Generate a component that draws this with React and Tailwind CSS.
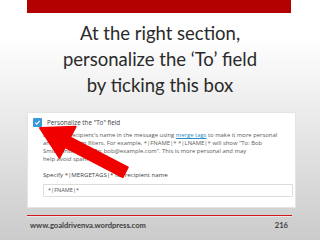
export default function App() {
  return (
    <div className="relative w-[320px] h-[240px] overflow-hidden bg-linear-to-b from-white from-[15%] to-[#cbcbcb]">
      <div className="ml-[27px] w-[264px] h-[13px] bg-[#b30000]" />
      <div
        className="mt-[7px] text-center text-[18.5px] leading-[26px] text-[#2a2a2a]"
        style={{ fontFamily: "Lato, 'Open Sans', sans-serif" }}
      >
        <div>At the right section,</div>
        <div>personalize the ‘To’ field</div>
        <div>by ticking this box</div>
      </div>
      <div
        className="mt-[14px] ml-[27px] w-[269px] h-[96px] bg-white border border-[#e4e4e4] text-[#5a5a5a]"
        style={{ fontFamily: "'Open Sans', sans-serif" }}
      >
        <div className="flex items-center mt-[5px] ml-[5px]">
          <div className="w-[9px] h-[9px] rounded-[1px] bg-[#3a9ad9] flex items-center justify-center">
            <svg width="7" height="7" viewBox="0 0 7 7">
              <path d="M1.3 3.7 L2.8 5.1 L5.7 1.8" fill="none" stroke="white" strokeWidth="1.1" />
            </svg>
          </div>
          <div className="ml-[5px] text-[6.3px] leading-[9px] text-[#404040] whitespace-nowrap">
            Personalize the "To" field
          </div>
        </div>
        <div className="ml-[15px] mt-[4px] text-[5.9px] leading-[8px] whitespace-nowrap">
          <div>
            Enter the recipient's name in the message using{" "}
            <span className="text-[#2a8cc6] underline">merge tags</span> to make it more personal
          </div>
          <div>and avoid spam filters. For example, *|FNAME|* *|LNAME|* will show "To: Bob</div>
          <div>Smith" instead of "To: bob@example.com". This is more personal and may</div>
          <div>help avoid spam filters.</div>
        </div>
        <div className="ml-[15px] mt-[8px] text-[6.1px] leading-[8px] text-[#404040] whitespace-nowrap">
          Specify *|MERGETAGS|* for recipient name
        </div>
        <div className="ml-[15px] mt-[5px] w-[250px] h-[13px] border border-[#dcdcdc] rounded-[1px] flex items-center pl-[4px] text-[5.6px] text-[#555] whitespace-nowrap">
          *|FNAME|*
        </div>
      </div>
      <div className="mt-[7px] ml-[27px] w-[265px] h-[1px] bg-[#d01818]" />
      <div className="ml-[27px] w-[265px] h-[1px] bg-[#e8e8e8]" />
      <div
        className="mt-[3px] ml-[30px] w-[258px] flex justify-between text-[7.6px] leading-[10px] text-[#404040]"
        style={{ fontFamily: "Lato, 'Open Sans', sans-serif" }}
      >
        <span className="font-bold">www.goaldrivenva.wordpress.com</span>
        <span className="font-bold">216</span>
      </div>
      <svg className="absolute left-0 top-0" width="320" height="240" viewBox="0 0 320 240">
        <g transform="translate(40 128) rotate(27.4)">
          <polygon
            points="0,0 31,-17.5 31,-5.5 96,-5.5 96,5.5 31,5.5 31,17.5"
            fill="#f10000"
            stroke="#f10000"
            strokeWidth="2"
            strokeLinejoin="round"
          />
        </g>
      </svg>
    </div>
  );
}
